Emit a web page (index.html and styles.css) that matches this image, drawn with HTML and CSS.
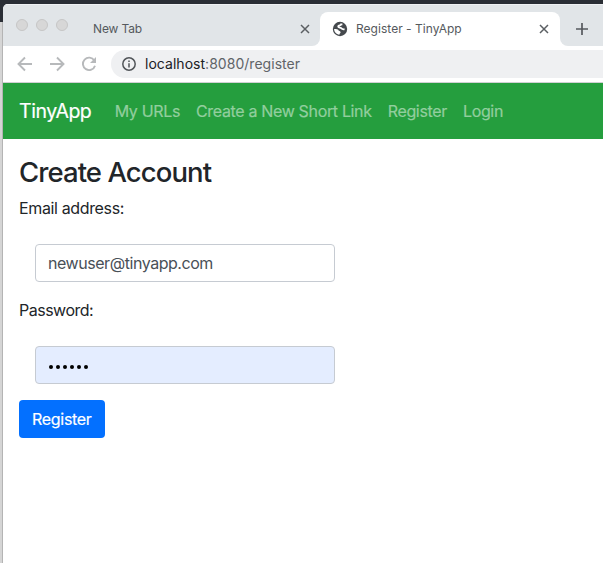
FILE: index.html
```html
<!DOCTYPE html>
<html lang="en">
<head>
<meta charset="utf-8">
<title>Register - TinyApp</title>
<link rel="stylesheet" href="styles.css">
</head>
<body>
<div class="window">
  <div class="tabstrip">
    <div class="strip-left">
      <div class="lights"><i></i><i></i><i></i></div>
      <span class="tab-title idle">New Tab</span>
      <svg class="close" viewBox="0 0 10 10"><path d="M1 1l8 8M9 1l-8 8"/></svg>
    </div>
    <div class="tab-slot">
      <div class="tab">
        <svg class="globe" viewBox="0 0 16 16"><circle cx="8" cy="8" r="7.2" fill="#45494d"/><path d="M10.4 3.4H9C8.6 4.8 6.2 4.2 6.2 5.5C6.2 6.8 8.8 6.4 9.6 7.5C10.2 8.3 11.2 8.2 12.6 8.4" fill="none" stroke="#fff" stroke-width="1.8"/><path d="M2.1 8.1C4.2 8.1 6.4 8.2 6.8 9.7C7.9 9.9 8.9 10.5 8.5 11.7C8.1 12.2 7.6 12.7 7.4 13.7C4.2 13.4 2.1 11 2.1 8.1Z" fill="#fff"/></svg>
        <span class="tab-title active">Register - TinyApp</span>
        <svg class="close" viewBox="0 0 10 10"><path d="M1 1l8 8M9 1l-8 8"/></svg>
      </div>
    </div>
    <div class="strip-right">
      <svg class="plus" viewBox="0 0 12 12"><path d="M6 0v12M0 6h12"/></svg>
    </div>
  </div>
  <div class="toolbar">
    <svg class="tool" viewBox="0 0 16 16"><path d="M15 8H2M8 1.5L1.5 8L8 14.5"/></svg>
    <svg class="tool" viewBox="0 0 16 16"><path d="M1 8h13M8 1.5L14.5 8L8 14.5"/></svg>
    <svg class="tool" viewBox="0 0 16 16"><path d="M13.3 4.5A6.2 6.2 0 1 0 14 9.7"/><path class="solid" d="M15 1v6H9z"/></svg>
    <div class="address">
      <svg class="info" viewBox="0 0 14 14"><circle cx="7" cy="7" r="6.2"/><path d="M7 6.2v4.3M7 3.4v1.5"/></svg>
      <span class="url"><b>localhost</b>:8080/register</span>
    </div>
  </div>
  <nav class="navbar">
    <a class="brand">TinyApp</a>
    <a class="link">My URLs</a>
    <a class="link">Create a New Short Link</a>
    <a class="link">Register</a>
    <a class="link">Login</a>
  </nav>
  <main>
    <h3>Create Account</h3>
    <form>
      <label for="email">Email address:</label>
      <input id="email" type="text" value="newuser@tinyapp.com">
      <label class="tight">Password:</label>
      <div class="field filled"><i></i><i></i><i></i><i></i><i></i><i></i></div>
      <button type="button">Register</button>
    </form>
  </main>
</div>
</body>
</html>
```
FILE: styles.css
```css
* { box-sizing: border-box; }
body {
  margin: 0;
  height: 563px;
  overflow: hidden;
  padding: 4px 0 0 3px;
  background: linear-gradient(90deg, transparent 2px, #b4b4b4 2px, #b4b4b4 3px, transparent 3px) 0 22px no-repeat, linear-gradient(#2a2e35 22px, #d5d5d5 22px);
  font: 16px/24px Inter, "Liberation Sans", sans-serif;
  color: #212529;
}
.window { height: 559px; background: #fff; border-top-left-radius: 5px; overflow: hidden; }
.tabstrip { display: flex; height: 42px; }
.strip-left {
  display: flex; align-items: center; width: 317px; padding: 8px 10px 0 12px;
  background: #e1e5e8; border-bottom-right-radius: 8px;
  box-shadow: inset 0 1px #eff1f3;
}
.lights { display: flex; gap: 8px; margin: -8px 0 0 1px; }
.lights i { width: 12px; height: 12px; border-radius: 50%; background: #d7d7d7; border: 1px solid #c6c6c6; }
.tab-title { font-size: 12px; line-height: 16px; color: #55595d; letter-spacing: -0.15px; }
.tab-title.active { letter-spacing: 0.03px; }
.idle { margin-left: 25px; }
.close { width: 10px; height: 10px; margin-left: auto; fill: none; stroke: #5b5f63; stroke-width: 1.5; }
.tab-slot { width: 240px; padding-top: 8px; background: #e1e5e8; box-shadow: inset 0 1px #eff1f3; }
.tab { display: flex; align-items: center; height: 34px; padding: 0 11px 0 12px; background: #fff; border-radius: 8px 8px 0 0; }
.globe { width: 16px; height: 16px; margin-right: 8px; }
.strip-right { flex: 1; padding: 19px 0 0 16px; background: #e1e5e8; border-bottom-left-radius: 8px; box-shadow: inset 0 1px #eff1f3; }
.plus { display: block; width: 12px; height: 12px; fill: none; stroke: #55595d; stroke-width: 1.7; }
.toolbar { display: flex; align-items: center; height: 37px; padding-left: 14px; gap: 16px; border-bottom: 1px solid #d0d0d3; }
.tool { width: 16px; height: 16px; flex: none; fill: none; stroke: #b7b9bb; stroke-width: 1.9; }
.tool .solid { fill: #b7b9bb; stroke: none; }
.address { display: flex; align-items: center; flex: 1; height: 28px; margin-left: -2px; padding-left: 11px; background: #eff0f2; border-radius: 14px 0 0 14px; }
.info { width: 14px; height: 14px; margin-right: 9px; fill: none; stroke: #505458; stroke-width: 1.5; }
.url { font-size: 14px; color: #606468; letter-spacing: 0.03px; }
.url b { font-weight: 400; color: #202124; }
.navbar { display: flex; align-items: center; height: 56px; padding-left: 16px; gap: 16px; background: #259e3e; }
.brand { margin-right: 7.3px; font-size: 19.5px; line-height: 30px; color: #fff; letter-spacing: -0.45px; -webkit-text-stroke: 0.2px; }
.link { color: #92ce9e; letter-spacing: -0.34px; white-space: nowrap; -webkit-text-stroke: 0.2px; }
main { padding: 18px 16px; }
h3 { margin: 0 0 8px; font-size: 27.5px; line-height: 31px; font-weight: 500; letter-spacing: -0.92px; }
form { display: flex; flex-direction: column; align-items: flex-start; }
label { letter-spacing: -0.36px; }
label.tight { letter-spacing: -0.5px; }
input, .field {
  width: 300px; height: 38px; margin: 24px 16px 16px; padding: 6px 12px;
  border: 1px solid #c6cbd2; border-radius: 4px; background: #fff;
  font: inherit; color: #495057; letter-spacing: -0.45px;
}
.field { display: flex; align-items: center; gap: 3px; padding-left: 13px; }
.filled { background: #e4edff; }
.field i { width: 4px; height: 4px; margin-top: 3px; border-radius: 50%; background: #000; }
button { height: 38px; padding: 6px 13px; border: 0; border-radius: 4px; background: #0370ff; color: #fff; font: inherit; letter-spacing: -0.3px; -webkit-text-stroke: 0.2px; }
```
